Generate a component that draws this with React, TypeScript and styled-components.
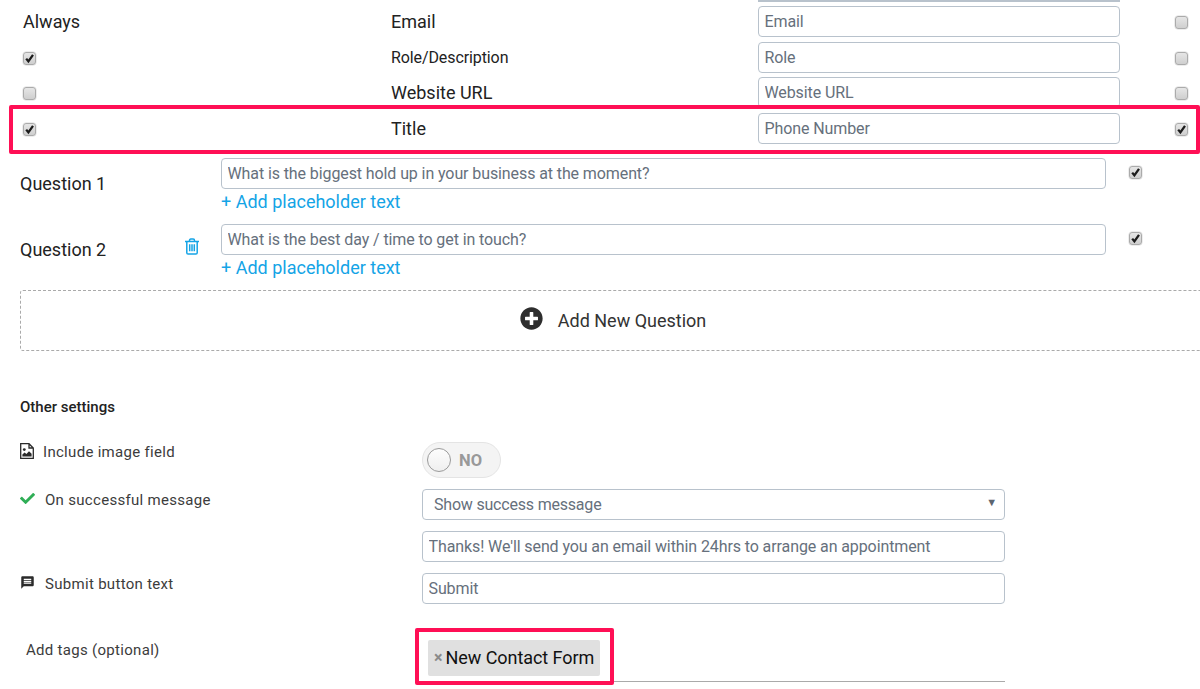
import React from 'react';
import styled, {createGlobalStyle} from 'styled-components';
import {FaCheck, FaPlusCircle} from 'react-icons/fa';
import {MdMessage} from 'react-icons/md';

const Global = createGlobalStyle`
  html, body {
    margin: 0;
    padding: 0;
    background: white;
  }
  * {
    box-sizing: border-box;
  }
  body {
    font-family: Roboto, "Liberation Sans", sans-serif;
    color: #222;
  }
`;

const Page = styled.div`
  width: 1200px;
  height: 689px;
  overflow: hidden;
`;

const FieldList = styled.div`
  display: flex;
  flex-direction: column;
  gap: 4.5px;
  padding-left: 23px;
`;

const Sliver = styled.div`
  width: 362px;
  height: 1.5px;
  margin-left: 735px;
  background: #b8c2cc;
`;

const FieldRow = styled.div`
  position: relative;
  display: grid;
  grid-template-columns: 368px 367px 362px 1fr;
  align-items: center;
  height: 31px;
`;

const FieldName = styled.div<{$small?: boolean}>`
  padding-top: 1px;
  font-size: ${p => (p.$small ? '16px' : '18px')};
  letter-spacing: ${p => (p.$small ? '-0.1px' : '0')};
  line-height: 20px;
  color: #222;
`;

const TextBox = styled.input`
  display: block;
  width: 100%;
  height: 31px;
  padding: 0 5.5px;
  border: 1.5px solid #b8c2cc;
  border-radius: 4px;
  background: white;
  font: 16px Roboto, "Liberation Sans", sans-serif;
  letter-spacing: -0.1px;
  outline: none;

  &::placeholder {
    color: #66707c;
    opacity: 1;
  }
`;

const Box = styled.span<{$right?: number; $low?: boolean}>`
  display: block;
  width: 13px;
  height: 13px;
  margin-top: ${p => (p.$low ? 2 : 0)}px;
  margin-left: ${p => p.$right || 0}px;
  border: 1px solid #ababab;
  border-radius: 3px;
  background: linear-gradient(#e6e6e6, #cfcfcf);
  box-shadow: 0 0 0 0.5px #dcdcdc;
`;

const Tick = styled.svg`
  display: block;
  width: 11px;
  height: 11px;
`;

function Check(props: {on?: boolean; right?: number; low?: boolean}) {
  return (
    <Box $right={props.right} $low={props.low}>
      {props.on &&
        <Tick viewBox="0 0 11 11">
          <path d="M2.2 5.6 L4.4 8.4 L9 1.8" fill="none" stroke="#1c1c1c" strokeWidth="2.3"/>
        </Tick>}
    </Box>
  );
}

const Highlight = styled.div`
  position: absolute;
  border: 4px solid #ff0f55;
  border-radius: 2px;
  pointer-events: none;
`;

const RowHighlight = styled(Highlight)`
  left: -14px;
  top: -8px;
  width: 1191px;
  height: 49px;
`;

const TagHighlight = styled(Highlight)`
  left: -7px;
  top: -0.5px;
  width: 199px;
  height: 57.5px;
`;

const Questions = styled.div`
  display: flex;
  flex-direction: column;
  gap: 14px;
  margin-top: 14.5px;
  padding-left: 20px;
`;

const Question = styled.div`
  display: grid;
  grid-template-columns: 201px 885px 1fr;
  height: 52px;
`;

const QuestionName = styled.div`
  display: flex;
  align-items: center;
  justify-content: space-between;
  padding: 0 21px 2px 0;
  font-size: 18px;
`;

const Trash = styled.svg`
  width: 16px;
  height: 17px;
  margin-top: -6px;
  color: #14a4e6;
`;

const AddLink = styled.a`
  display: block;
  margin-top: 1.5px;
  font-size: 18px;
  line-height: 21px;
  color: #14a4e6;
`;

const CheckCell = styled.div`
  padding: 8px 0 0 23px;
`;

const AddQuestion = styled.div`
  display: flex;
  align-items: center;
  justify-content: center;
  gap: 15px;
  width: 1190px;
  height: 60.5px;
  margin: 14px 0 0 20px;
  padding-right: 4px;
  border: 1px dashed #aaa;
  border-radius: 3px;
  font-size: 18px;
  color: #333;

  svg {
    font-size: 23px;
    margin-top: -4px;
    color: #2e2e2e;
  }
`;

const Heading = styled.h3`
  margin: 46.5px 0 0 20px;
  font-size: 15px;
  line-height: 20px;
  font-weight: 500;
  color: #222;
`;

const Settings = styled.div`
  display: grid;
  grid-template-columns: 402px 583px;
  row-gap: 11px;
  margin: 25px 0 0 20px;
`;

const SettingName = styled.div<{$top?: number; $indent?: number}>`
  display: flex;
  align-items: center;
  align-self: start;
  margin-top: ${p => p.$top ?? 1}px;
  margin-left: ${p => p.$indent || 0}px;
  font-size: 15px;
  line-height: 20px;
  letter-spacing: 0.3px;
  color: #3c3c3c;
`;

const SettingIcon = styled.span<{$width: number; $color?: string}>`
  display: flex;
  width: ${p => p.$width}px;
  margin-top: -3px;
  font-size: 15px;
  color: ${p => p.$color || '#2b2b2b'};
`;

const FileImage = styled.svg`
  width: 14px;
  height: 16px;
  color: #2b2b2b;
`;

const Toggle = styled.div`
  display: flex;
  align-items: center;
  gap: 8px;
  width: 79px;
  height: 36px;
  padding-left: 4px;
  border: 1.5px solid #e4e4e4;
  border-radius: 18px;
  background: #f4f4f4;
  font-size: 16.5px;
  font-weight: 700;
  color: #999;
`;

const Knob = styled.span`
  width: 24px;
  height: 24px;
  border: 1px solid #9a9a9a;
  border-radius: 50%;
  background: linear-gradient(#fdfdfd, #efefef);
`;

const SelectBox = styled.div`
  display: flex;
  align-items: center;
  justify-content: space-between;
  height: 31px;
  padding: 0 7px 4px 11px;
  border: 1.5px solid #b8c2cc;
  border-radius: 4px;
  font-size: 16px;
  letter-spacing: -0.2px;
  color: #66707c;

  span {
    padding-top: 4px;
  }
  small {
    font-size: 11px;
    color: #5c6670;
  }
`;

const TagField = styled.div`
  position: relative;
  height: 53.5px;
  margin-top: 13px;
  padding: 12px 0 0 6px;
  border-bottom: 1.5px solid #aaa;
`;

const Tag = styled.div`
  display: inline-flex;
  align-items: center;
  gap: 3px;
  height: 36px;
  padding: 0 6px 1px;
  border-radius: 2px;
  background: #e0e0e0;
  font-size: 18px;
  letter-spacing: -0.05px;
  color: #111;

  b {
    font-size: 16px;
    font-weight: 700;
    color: #8a8a8a;
  }
`;

function App() {
  return (
    <Page>
      <Global/>
      <FieldList>
        <Sliver/>
        <FieldRow>
          <FieldName>Always</FieldName>
          <FieldName>Email</FieldName>
          <TextBox placeholder="Email" readOnly/>
          <Check right={55} low/>
        </FieldRow>
        <FieldRow>
          <Check on low/>
          <FieldName $small>Role/Description</FieldName>
          <TextBox placeholder="Role" readOnly/>
          <Check right={55} low/>
        </FieldRow>
        <FieldRow>
          <Check low/>
          <FieldName>Website URL</FieldName>
          <TextBox placeholder="Website URL" readOnly/>
          <Check right={55} low/>
        </FieldRow>
        <FieldRow>
          <Check on low/>
          <FieldName>Title</FieldName>
          <TextBox placeholder="Phone Number" readOnly/>
          <Check on right={55} low/>
          <RowHighlight/>
        </FieldRow>
      </FieldList>
      <Questions>
        <Question>
          <QuestionName>Question 1</QuestionName>
          <div>
            <TextBox placeholder="What is the biggest hold up in your business at the moment?" readOnly/>
            <AddLink>+ Add placeholder text</AddLink>
          </div>
          <CheckCell><Check on/></CheckCell>
        </Question>
        <Question>
          <QuestionName>
            Question 2
            <Trash viewBox="0 0 16 17" fill="none" stroke="currentColor" strokeWidth="1.5">
              <path d="M1 3.5 H15 M5.5 3.5 V2.4 Q5.5 1.1 6.8 1.1 H9.2 Q10.5 1.1 10.5 2.4 V3.5 M2.8 3.5 V14.8 Q2.8 16.1 4.1 16.1 H11.9 Q13.2 16.1 13.2 14.8 V3.5 M5.7 6.3 V13.3 M8 6.3 V13.3 M10.3 6.3 V13.3"/>
            </Trash>
          </QuestionName>
          <div>
            <TextBox placeholder="What is the best day / time to get in touch?" readOnly/>
            <AddLink>+ Add placeholder text</AddLink>
          </div>
          <CheckCell><Check on/></CheckCell>
        </Question>
      </Questions>
      <AddQuestion>
        <FaPlusCircle/>
        Add New Question
      </AddQuestion>
      <Heading>Other settings</Heading>
      <Settings>
        <SettingName $top={0}>
          <SettingIcon $width={23}>
            <FileImage viewBox="0 0 14 16">
              <path d="M0.7 0.7 H9 L13.3 5 V15.3 H0.7 Z M9 0.7 V5 H13.3" fill="none" stroke="currentColor" strokeWidth="1.3"/>
              <circle cx="4.3" cy="6.6" r="1.4" fill="currentColor"/>
              <path d="M2.4 13.6 V11.4 L4.6 9.6 L6.4 11 L9 8.2 L11.6 10.8 V13.6 Z" fill="currentColor"/>
            </FileImage>
          </SettingIcon>
          Include image field
        </SettingName>
        <Toggle><Knob/>NO</Toggle>
        <SettingName>
          <SettingIcon $width={25} $color="#2fae56"><FaCheck/></SettingIcon>
          On successful message
        </SettingName>
        <SelectBox><span>Show success message</span><small>▼</small></SelectBox>
        <div/>
        <TextBox placeholder="Thanks! We'll send you an email within 24hrs to arrange an appointment" readOnly/>
        <SettingName>
          <SettingIcon $width={25}><MdMessage/></SettingIcon>
          Submit button text
        </SettingName>
        <TextBox placeholder="Submit" readOnly/>
        <SettingName $top={25} $indent={6}>Add tags (optional)</SettingName>
        <TagField>
          <Tag><b>×</b>New Contact Form</Tag>
          <TagHighlight/>
        </TagField>
      </Settings>
    </Page>
  );
}

export default App;
